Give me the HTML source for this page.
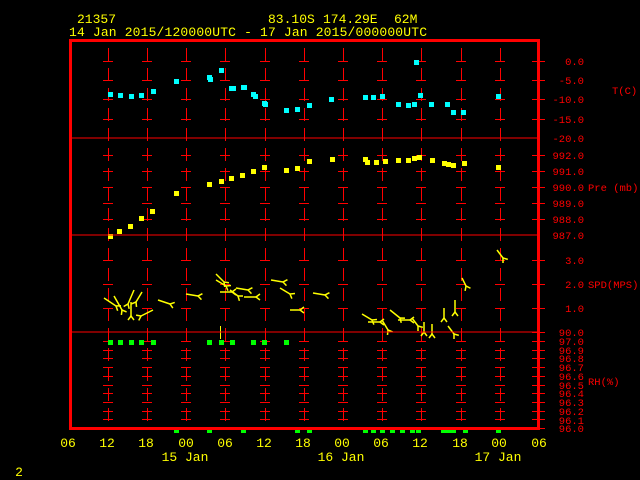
<!DOCTYPE html>
<html><head><style>
html,body{margin:0;padding:0;background:#000;width:640px;height:480px;overflow:hidden}
svg{display:block}
text{font-family:"Liberation Mono",monospace;font-size:13px}
.y{fill:#ffff00}.r{fill:#ff0000}
.r text{font-size:10.5px}
</style></head><body>
<svg id="s" width="640" height="480" xmlns="http://www.w3.org/2000/svg">
<g id="grid" stroke="#ff0000" stroke-width="1"></g>
<g id="data"></g>
<rect x="70.5" y="40.5" width="468" height="388" fill="none" stroke="#ff0000" stroke-width="3"/>
<line x1="70" y1="138" x2="538" y2="138" stroke="#ff0000"/>
<line x1="70" y1="235" x2="538" y2="235" stroke="#ff0000"/>
<line x1="70" y1="332" x2="540" y2="332" stroke="#ff0000"/>
<text class="y" x="77" y="23">21357</text>
<text class="y" x="268" y="23">83.10S</text>
<text class="y" x="323" y="23">174.29E</text>
<text class="y" x="394" y="23">62M</text>
<text class="y" x="69" y="36" textLength="358">14 Jan 2015/120000UTC - 17 Jan 2015/000000UTC</text>
<g class="r" text-anchor="end">
<text x="584" y="65">0.0</text><text x="584" y="84">-5.0</text><text x="584" y="103">-10.0</text><text x="584" y="123">-15.0</text><text x="584" y="142">-20.0</text>
<text x="584" y="159">992.0</text><text x="584" y="175">991.0</text><text x="584" y="191">990.0</text><text x="584" y="207">989.0</text><text x="584" y="223">988.0</text><text x="584" y="239">987.0</text>
<text x="584" y="264">3.0</text><text x="584" y="288">2.0</text><text x="584" y="312">1.0</text><text x="584" y="336">90.0</text>
<text x="584" y="345">97.0</text><text x="584" y="354">96.9</text><text x="584" y="362">96.8</text><text x="584" y="371">96.7</text><text x="584" y="380">96.6</text><text x="584" y="389">96.5</text><text x="584" y="397">96.4</text><text x="584" y="406">96.3</text><text x="584" y="415">96.2</text><text x="584" y="424">96.1</text><text x="584" y="432">96.0</text>
<text x="612" y="94" text-anchor="start">T(C)</text>
<text x="588" y="191" text-anchor="start">Pre (mb)</text>
<text x="588" y="288" text-anchor="start">SPD(MPS)</text>
<text x="588" y="385" text-anchor="start">RH(%)</text>
</g>
<g class="y" text-anchor="middle">
<text x="68" y="447">06</text><text x="107" y="447">12</text><text x="146" y="447">18</text><text x="186" y="447">00</text><text x="225" y="447">06</text><text x="264" y="447">12</text><text x="303" y="447">18</text><text x="342" y="447">00</text><text x="381" y="447">06</text><text x="420" y="447">12</text><text x="460" y="447">18</text><text x="499" y="447">00</text><text x="539" y="447">06</text>
<text x="185" y="461">15 Jan</text><text x="341" y="461">16 Jan</text><text x="498" y="461">17 Jan</text>
<text x="19" y="476">2</text>
</g>
</svg>
<script>
var NS="http://www.w3.org/2000/svg",g=document.getElementById('grid'),d=document.getElementById('data');
function el(p,t,a){var e=document.createElementNS(NS,t);for(var k in a)e.setAttribute(k,a[k]);p.appendChild(e);return e}
var xs=[108,147,186,225,265,304,343,382,421,461,500];
var lv=[61,80,99,119,155,171,187,203,219,260,284,308,341,350,358,367,376,385,393,402,411,419];
xs.forEach(function(x){
 el(g,'line',{x1:x+.5,y1:48,x2:x+.5,y2:425,'stroke-dasharray':'13,7'});
 lv.forEach(function(y){el(g,'line',{x1:x-5,y1:y+.5,x2:x+5,y2:y+.5})});
});
[61,80,99,119,155,171,187,203,219,260,284,308,332,341,350,358,367,376,385,393,402,411,419,428].forEach(function(y){el(g,'line',{x1:532,y1:y+.5,x2:545,y2:y+.5})});
function sq(a,c,s){a.forEach(function(p){el(d,'rect',{x:p[0]-2,y:p[1]-2,width:s||5,height:s||5,fill:c})})}
sq([[110,94],[120,95],[131,96],[141,95],[153,91],[176,81],[209,77],[210,79],[221,70],[231,88],[233,88],[243,87],[244,87],[253,94],[255,96],[264,103],[265,104],[286,110],[297,109],[309,105],[331,99],[365,97],[373,97],[382,96],[398,104],[408,105],[414,104],[420,95],[416,62],[431,104],[447,104],[453,112],[463,112],[498,96]],'#00ffff');
sq([[110,236],[119,231],[130,226],[141,218],[152,211],[176,193],[209,184],[221,181],[231,178],[242,175],[253,171],[264,167],[286,170],[297,168],[309,161],[332,159],[365,159],[367,162],[376,162],[385,161],[398,160],[408,160],[414,158],[419,157],[432,160],[444,163],[448,164],[453,165],[464,163],[498,167]],'#ffff00');
sq([[110,342],[120,342],[131,342],[141,342],[153,342],[209,342],[221,342],[232,342],[253,342],[264,342],[286,342]],'#00ff00');
sq([[176,430],[209,430],[243,430],[297,430],[309,430],[365,430],[373,430],[382,430],[392,430],[402,430],[412,430],[418,430],[443,430],[448,430],[453,430],[465,430],[498,430]],'#00ff00');
var w=[[116,306,-12,-8],[122,310,-8,-14],[128,304,6,-14],[131,316,0,-14],[141,316,12,-6],[136,302,6,-10],[170,304,-12,-4],[198,296,-12,-2],[224,282,-8,-8],[226,286,-10,-6],[232,292,-12,0],[238,296,-8,-6],[248,290,-12,-2],[256,297,-12,0],[283,282,-12,-2],[290,294,-10,-6],[300,310,-10,0],[325,295,-12,-2],[372,320,-10,-6],[380,322,-12,0],[388,330,-6,-10],[400,318,-10,-8],[410,320,-12,0],[418,326,-6,-8],[424,332,0,-10],[432,334,0,-10],[444,318,0,-10],[455,312,0,-12],[454,334,-6,-8],[466,286,-4,-8],[503,258,-6,-8]];
w.forEach(function(a){var x=a[0],y=a[1];el(d,'line',{x1:x,y1:y,x2:x+a[2],y2:y+a[3],stroke:'#ffff00','stroke-width':1.5});
 var L=Math.hypot(a[2],a[3]),ux=a[2]/L,uy=a[3]/L;
 el(d,'polyline',{points:(x-4*ux+3*uy)+','+(y-4*uy-3*ux)+' '+x+','+y+' '+(x-4*ux-3*uy)+','+(y-4*uy+3*ux),fill:'none',stroke:'#ffff00','stroke-width':1.5});
});
el(d,'line',{x1:220.5,y1:326,x2:220.5,y2:339,stroke:'#ffff00'});
</script>
</body></html>
